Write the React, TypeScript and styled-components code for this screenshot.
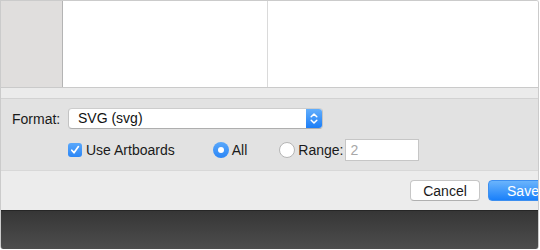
import { FC } from 'react';
import styled, { createGlobalStyle } from 'styled-components';

const GlobalStyle = createGlobalStyle`
  html, body {
    margin: 0;
    padding: 0;
    background: #ffffff;
  }
  body {
    font-family: "Liberation Sans", Arial, sans-serif;
    font-size: 14px;
    color: #1e1e1e;
  }
`;

const Chevrons: FC = () => (
  <svg width="8" height="13" viewBox="0 0 8 13">
    <path d="M1.2 4.8 L4 2 L6.8 4.8" fill="none" stroke="#fff" strokeWidth="1.5" strokeLinecap="round" strokeLinejoin="round" />
    <path d="M1.2 8.2 L4 11 L6.8 8.2" fill="none" stroke="#fff" strokeWidth="1.5" strokeLinecap="round" strokeLinejoin="round" />
  </svg>
);

const Check: FC = () => (
  <svg width="10" height="10" viewBox="0 0 10 10">
    <path d="M1.8 5.2 L4 7.8 L8.4 1.6" fill="none" stroke="#fff" strokeWidth="1.7" strokeLinecap="round" strokeLinejoin="round" />
  </svg>
);

export default function App() {
  return (
    <>
      <GlobalStyle />
      <Window>
        <Sheet>
          <Browser>
            <Sidebar />
            <Column $width={204} />
            <Column />
          </Browser>
          <Strip />
          <Options>
            <FormatRow>
              <Label>Format:</Label>
              <Popup>
                <PopupText>SVG (svg)</PopupText>
                <Stepper>
                  <Chevrons />
                </Stepper>
              </Popup>
            </FormatRow>
            <ChoiceRow>
              <Choice>
                <CheckBox>
                  <Check />
                </CheckBox>
                Use Artboards
              </Choice>
              <Choice $gap={3} $left={38}>
                <Radio $on />
                All
              </Choice>
              <Choice $gap={3} $left={32}>
                <Radio />
                Range:
              </Choice>
              <RangeField>2</RangeField>
            </ChoiceRow>
          </Options>
          <ButtonBar>
            <Button>Cancel</Button>
            <Button $primary>Save</Button>
          </ButtonBar>
        </Sheet>
        <Desk />
      </Window>
    </>
  );
}

const Window = styled.div`
  width: 540px;
  height: 250px;
  display: flex;
  flex-direction: column;
  overflow: hidden;
`;

const Sheet = styled.div`
  width: 537px;
  border: 1px solid #cbcbcb;
  border-bottom: none;
  border-top-right-radius: 3px;
  overflow: hidden;
  display: flex;
  flex-direction: column;
`;

const Browser = styled.div`
  height: 86px;
  display: flex;
  background: #ffffff;
  border-bottom: 1px solid #cacaca;
`;

const Sidebar = styled.div`
  width: 61px;
  background: #e0dedd;
  border-right: 1px solid #b4b4b4;
`;

const Column = styled.div<{ $width?: number }>`
  ${({ $width }) => ($width ? `width: ${$width}px;` : 'flex: 1;')}
  background: #ffffff;
  border-right: 1px solid #dadada;
  &:last-child {
    border-right: none;
  }
`;

const Strip = styled.div`
  height: 10px;
  background: #ebebeb;
  border-bottom: 1px solid #d2d2d2;
`;

const Options = styled.div`
  height: 72px;
  box-sizing: border-box;
  background: #e2e2e2;
  padding: 9px 0 0 11px;
  display: flex;
  flex-direction: column;
  gap: 10px;
  border-bottom: 1px solid #d8d8d8;
`;

const FormatRow = styled.div`
  display: flex;
  align-items: center;
  gap: 8px;
`;

const Label = styled.span`
  width: 48px;
  text-align: right;
  color: #1a1a1a;
`;

const Popup = styled.div`
  width: 255px;
  height: 21px;
  box-sizing: border-box;
  display: flex;
  background: #ffffff;
  border: 1px solid #c3c3c3;
  border-top-color: #cdcdcd;
  border-bottom-color: #aeaeae;
  border-radius: 4px;
  overflow: hidden;
`;

const PopupText = styled.span`
  flex: 1;
  padding-left: 9px;
  line-height: 19px;
  color: #111;
`;

const Stepper = styled.div`
  width: 16px;
  display: flex;
  align-items: center;
  justify-content: center;
  background: linear-gradient(#62aefc, #1c7ef7);
`;

const ChoiceRow = styled.div`
  display: flex;
  align-items: center;
  padding-left: 56px;
  height: 22px;
`;

const Choice = styled.label<{ $gap?: number; $left?: number }>`
  display: flex;
  align-items: center;
  gap: ${({ $gap }) => $gap ?? 4}px;
  margin-left: ${({ $left }) => $left ?? 0}px;
  color: #1a1a1a;
`;

const CheckBox = styled.span`
  width: 14px;
  height: 14px;
  border-radius: 3px;
  background: linear-gradient(#5aa8fb, #2b86f6);
  display: flex;
  align-items: center;
  justify-content: center;
`;

const Radio = styled.span<{ $on?: boolean }>`
  width: 16px;
  height: 16px;
  box-sizing: border-box;
  border-radius: 50%;
  display: flex;
  align-items: center;
  justify-content: center;
  ${({ $on }) =>
    $on
      ? `background: linear-gradient(#5aa8fb, #2b86f6);
         &::after { content: ''; width: 6px; height: 6px; border-radius: 50%; background: #fff; }`
      : `background: #ffffff; border: 1px solid #b5b5b5;`}
`;

const RangeField = styled.span`
  margin-left: 2px;
  width: 74px;
  height: 22px;
  box-sizing: border-box;
  background: #ffffff;
  border: 1px solid #c6c6c6;
  padding-left: 4px;
  line-height: 20px;
  color: #a8a8a8;
`;

const ButtonBar = styled.div`
  height: 40px;
  box-sizing: border-box;
  background: #ececec;
  display: flex;
  justify-content: flex-end;
  gap: 8px;
  padding-top: 9px;
  border-bottom: 1px solid #262626;
`;

const Button = styled.button<{ $primary?: boolean }>`
  width: 70px;
  height: 21px;
  box-sizing: border-box;
  border-radius: 4px;
  font-family: "Liberation Sans", Arial, sans-serif;
  font-size: 14px;
  padding: 0;
  ${({ $primary }) =>
    $primary
      ? `background: linear-gradient(#6ab4fc, #1a80fa); border: 1px solid #3d8ff0; color: #ffffff; margin-right: -20px;`
      : `background: #ffffff; border: 1px solid #c6c6c6; border-bottom-color: #b0b0b0; color: #1a1a1a;`}
`;

const Desk = styled.div`
  width: 537px;
  height: 38px;
  border-bottom-left-radius: 3px;
  border-bottom-right-radius: 3px;
  background: linear-gradient(#363636, #4d4d4d);
  border-left: 1px solid #cbcbcb;
  border-right: 1px solid #cbcbcb;
`;
